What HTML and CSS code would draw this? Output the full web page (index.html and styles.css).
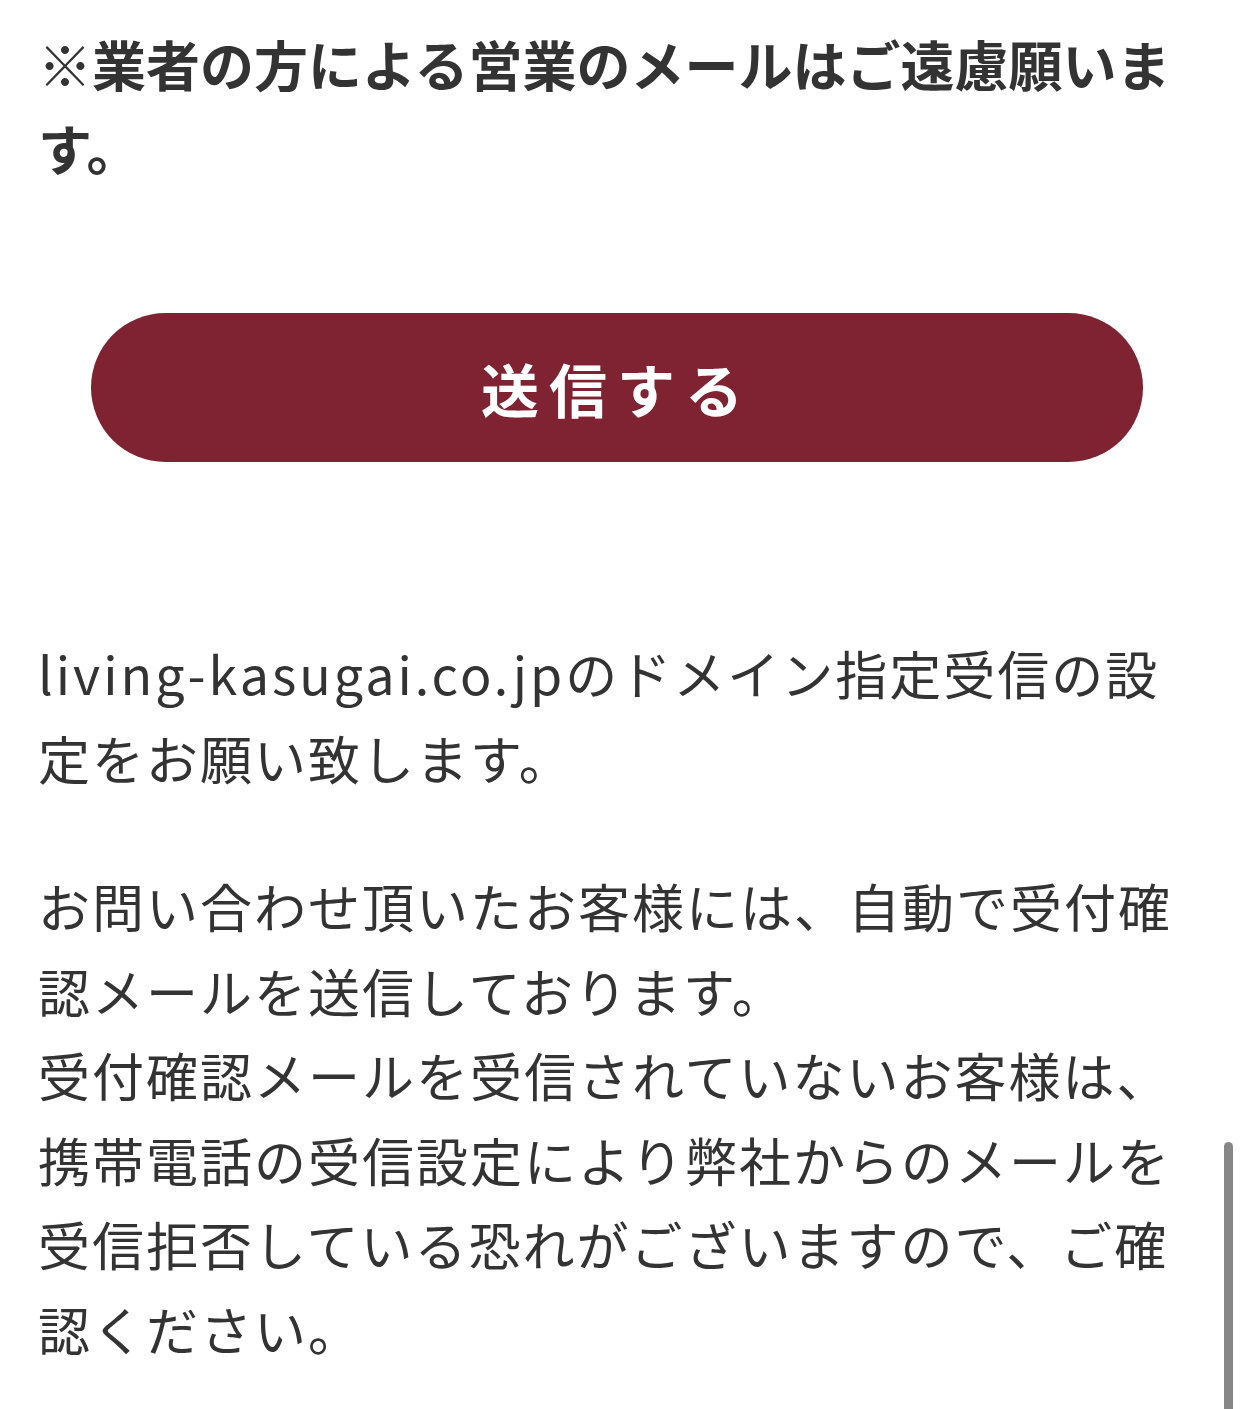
FILE: index.html
```html
<!DOCTYPE html>
<html lang="ja">
<head>
    <meta charset="UTF-8">
    <meta name="viewport" content="width=device-width, initial-scale=1.0">
    <title>お問い合わせ</title>
    <link rel="stylesheet" href="styles.css">
</head>
<body>
    <div class="contact">
        <p class="notice">※業者の方による営業のメールはご遠慮願います。</p>

        <div class="submit-wrap">
            <button type="submit" class="submit">送信する</button>
        </div>

        <p class="info"><span class="domain">living-kasugai.co.jp</span>のドメイン指定受信の設定をお願い致します。</p>
        <p class="info">お問い合わせ頂いたお客様には、自動で受付確認メールを送信しております。<br>受付確認メールを受信されていないお客様は、携帯電話の受信設定により弊社からのメールを受信拒否している恐れがございますので、ご確認ください。</p>
    </div>
    <!-- iOS style overlay scrollbar -->
    <div class="scroll-thumb"></div>
</body>
</html>
```

FILE: styles.css
```css
body {
    margin: 0;
    background-color: #ffffff;
    color: #333333;
    font-family: "Noto Sans CJK JP", "Noto Sans", sans-serif;
    overflow: hidden;
}

.contact {
    padding: 22px 48px 0 38px;
}

.notice {
    margin: 0;
    font-size: 54px;
    font-weight: bold;
    line-height: 84px;
    letter-spacing: 0;
}

.submit-wrap {
    display: flex;
    justify-content: center;
    padding: 0 51px 0 53px;
    margin: 123px 0 169px;
}

.submit {
    width: 100%;
    height: 149px;
    border: none;
    border-radius: 75px;
    background-color: #7f2232;
    color: #ffffff;
    font-family: "Noto Sans CJK JP", sans-serif;
    font-size: 58px;
    font-weight: bold;
    letter-spacing: 10px;
    cursor: pointer;
}

.info {
    margin: 0 0 64px;
    font-size: 52px;
    line-height: 84.5px;
    letter-spacing: 2px;
}

.domain {
    letter-spacing: 3px;
}

.scroll-thumb {
    position: fixed;
    right: 9px;
    top: 1142px;
    width: 9px;
    height: 300px;
    border-radius: 5px;
    background-color: #878787;
}
```
